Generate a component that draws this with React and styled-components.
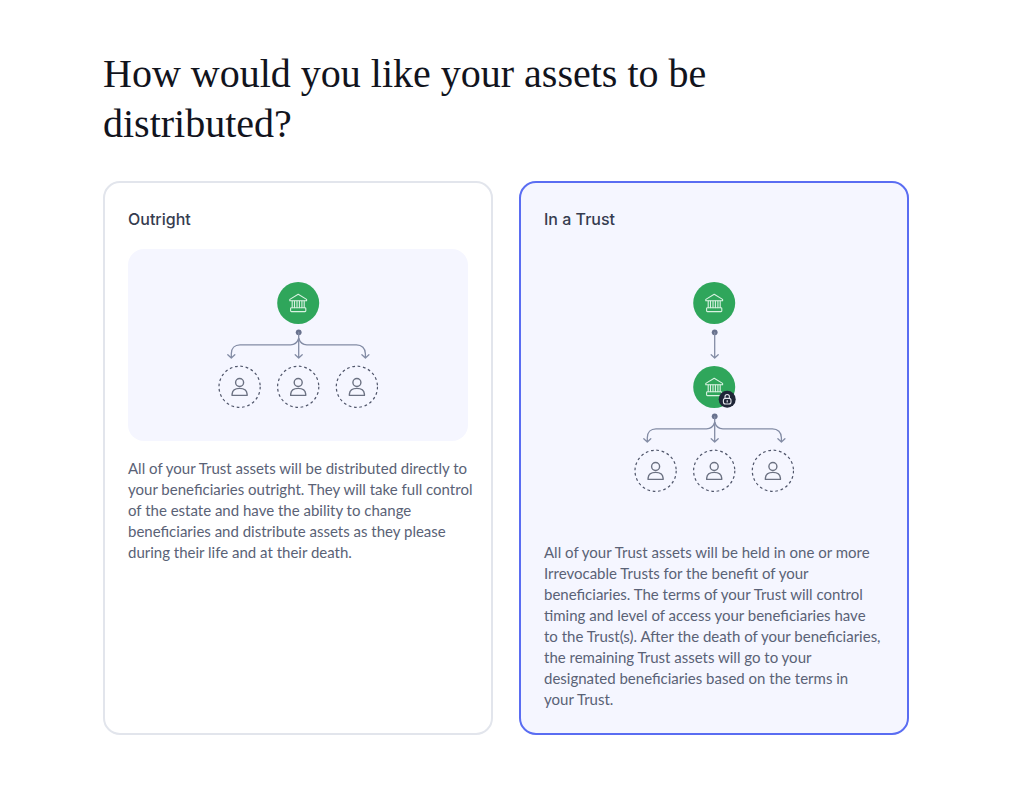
import { useState } from "react";
import styled, { createGlobalStyle } from "styled-components";

const GlobalStyle = createGlobalStyle`
    * {
        box-sizing: border-box;
    }
    body {
        margin: 0;
        background: #ffffff;
        font-family: Inter, "Liberation Sans", sans-serif;
    }
`

const Page = styled.main`
    padding: 49px 115px 53px 103px;
`
const Question = styled.h1`
    max-width: 640px;
    margin: 0 0 32px;
    color: #12141d;
    font-family: "Liberation Serif", serif;
    font-size: 40px;
    font-weight: 400;
    line-height: 50px;
`
const Options = styled.div`
    display: grid;
    grid-template-columns: repeat(2, 1fr);
    gap: 26px;
`
const Card = styled.label`
    display: flex;
    flex-direction: column;
    min-width: 0;
    padding: 23px;
    border: 2px solid ${({ $selected }) => ($selected ? "#5a6df2" : "#e2e5ec")};
    border-radius: 17px;
    background: ${({ $selected }) => ($selected ? "#f5f6ff" : "#ffffff")};
    cursor: pointer;
`
const HiddenRadio = styled.input`
    position: absolute;
    opacity: 0;
    pointer-events: none;
`
const CardTitle = styled.span`
    margin-bottom: 17px;
    color: #363c4f;
    font-size: 16px;
    font-weight: 500;
    line-height: 26px;
`
const Illustration = styled.span`
    display: flex;
    justify-content: center;
    padding: 33px 0;
    border-radius: 16px;
    background: #f5f6ff;
`
const Description = styled.span`
    margin-top: 17px;
    color: #5a6276;
    font-family: Lato, "Liberation Sans", sans-serif;
    font-size: 15px;
    line-height: 21px;
    white-space: pre;
`
const Diagram = styled.svg`
    display: block;
    fill: none;
    stroke-linecap: round;
    stroke-linejoin: round;
`

function TrustNode({ y, locked }) {
    return (
        <g transform={`translate(80.2 ${y})`}>
            <circle r="21" fill="#2fa65b" />
            <g stroke="#d9f2e2" strokeWidth="1.1">
                <path d="M0 -8.7L8.4 -3.6V-2.2H-8.4V-3.6Z" />
                <path d="M-6 -2V4.6M-3.7 -2V4.6M-1.2 -2V4.6M1.2 -2V4.6M3.7 -2V4.6M6 -2V4.6" />
                <rect x="-7.6" y="4.7" width="15.2" height="3.9" rx="0.8" />
            </g>
            {locked && (
                <g transform="translate(13 12.3)">
                    <circle r="8.5" fill="#1f2637" />
                    <g stroke="#e6e8ee" strokeWidth="1.1">
                        <rect x="-3.8" y="-0.9" width="7.6" height="5.6" rx="2" />
                        <path d="M-2.2 -1V-2.6a2.2 2.2 0 0 1 4.4 0V-1M0 1.2V2.6" />
                    </g>
                </g>
            )}
        </g>
    )
}

function Person({ x, y }) {
    return (
        <g transform={`translate(${x} ${y})`}>
            <circle r="20.6" stroke="#50566b" strokeWidth="1.2" strokeDasharray="2.7 2.7" strokeLinecap="butt" />
            <g stroke="#6b7182" strokeWidth="1.4">
                <circle cy="-4.3" r="4" />
                <path d="M-7.5 8.6V7.2C-7.2 3.8 -4.2 1.6 0 1.6S7.2 3.8 7.5 7.2V8.6Z" />
            </g>
        </g>
    )
}

function Arrow({ y }) {
    return (
        <g transform={`translate(0 ${y})`} stroke="#838ca5" strokeWidth="1.3">
            <circle cx="80.7" r="2.9" fill="#69728e" stroke="none" />
            <path d="M80.7 0V25.5M77.2 22.5L80.7 25.7L84.2 22.5" />
        </g>
    )
}

function Branches({ y }) {
    return (
        <g>
            <Arrow y={y} />
            <g transform={`translate(0 ${y})`} stroke="#838ca5" strokeWidth="1.3">
                <path d="M80.7 6C79.6 9.5 77 12.6 72.5 12.6H22C16.8 12.6 13.3 16 13.3 21.5V25.5M9.8 22.5L13.3 25.7L16.8 22.5" />
                <path d="M80.7 6C81.8 9.5 84.4 12.6 88.9 12.6H138.5C143.7 12.6 147.4 16 147.4 21.5V25.5M143.9 22.5L147.4 25.7L150.9 22.5" />
            </g>
            {[21.6, 80.2, 138.9].map(x => <Person key={x} x={x} y={y + 54.5} />)}
        </g>
    )
}

function OutrightDiagram() {
    return (
        <Diagram width="160" height="126" viewBox="0 0 160 126" aria-hidden="true">
            <TrustNode y={21} />
            <Branches y={50.3} />
        </Diagram>
    )
}

function TrustDiagram() {
    return (
        <Diagram width="160" height="210" viewBox="0 0 160 210" aria-hidden="true">
            <TrustNode y={21} />
            <Arrow y={50.3} />
            <TrustNode y={105} locked />
            <Branches y={134.3} />
        </Diagram>
    )
}

const options = [
    {
        id: "outright",
        title: "Outright",
        diagram: OutrightDiagram,
        text: `All of your Trust assets will be distributed directly to
your beneficiaries outright. They will take full control
of the estate and have the ability to change
beneficiaries and distribute assets as they please
during their life and at their death.`,
    },
    {
        id: "trust",
        title: "In a Trust",
        diagram: TrustDiagram,
        text: `All of your Trust assets will be held in one or more
Irrevocable Trusts for the benefit of your
beneficiaries. The terms of your Trust will control
timing and level of access your beneficiaries have
to the Trust(s). After the death of your beneficiaries,
the remaining Trust assets will go to your
designated beneficiaries based on the terms in
your Trust.`,
    },
]

export default function App() {
    const [selected, setSelected] = useState("trust")

    return (
        <>
            <GlobalStyle />
            <Page>
                <Question id="question">How would you like your assets to be distributed?</Question>
                <Options role="radiogroup" aria-labelledby="question">
                    {options.map(({ id, title, diagram: Picture, text }) => (
                        <Card key={id} htmlFor={id} $selected={selected === id}>
                            <HiddenRadio
                                type="radio"
                                name="distribution"
                                id={id}
                                checked={selected === id}
                                onChange={() => setSelected(id)}
                            />
                            <CardTitle>{title}</CardTitle>
                            <Illustration>
                                <Picture />
                            </Illustration>
                            <Description>{text}</Description>
                        </Card>
                    ))}
                </Options>
            </Page>
        </>
    )
}
